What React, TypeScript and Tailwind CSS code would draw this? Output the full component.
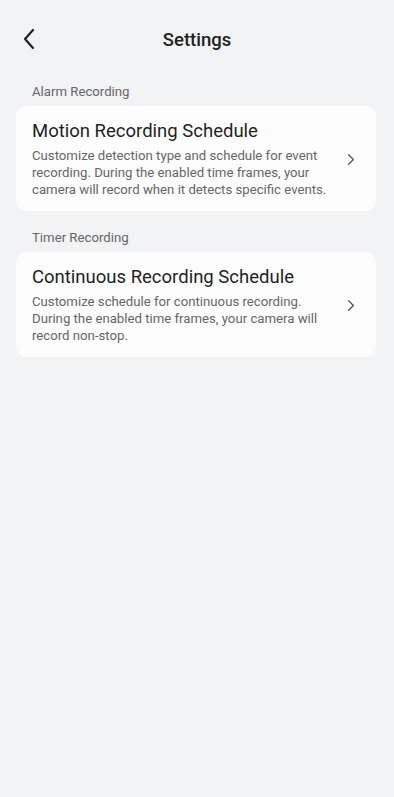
import React from 'react';

const sections = [
  {
    label: 'Alarm Recording',
    title: 'Motion Recording Schedule',
    desc: 'Customize detection type and schedule for event recording. During the enabled time frames, your camera will record when it detects specific events.',
  },
  {
    label: 'Timer Recording',
    title: 'Continuous Recording Schedule',
    desc: 'Customize schedule for continuous recording. During the enabled time frames, your camera will record non-stop.',
  },
];

const Chevron = ({ className }: { className?: string }) => (
  <svg viewBox="0 0 10 16" className={className} fill="none" stroke="currentColor" strokeWidth="1.6" strokeLinecap="round" strokeLinejoin="round">
    <path d="M2 2l6 6-6 6" />
  </svg>
);

export default function App() {
  return (
    <div className="min-h-[797px] w-full bg-[#f2f3f5] font-['Roboto',sans-serif]">
      {/* header */}
      <div className="relative h-[84px] flex items-start justify-center pt-[30px]">
        <button className="absolute left-[22px] top-[28px] text-[#222]">
          <svg viewBox="0 0 14 22" className="w-[14px] h-[22px]" fill="none" stroke="currentColor" strokeWidth="2.2" strokeLinecap="round" strokeLinejoin="round">
            <path d="M11 2L3 11l8 9" />
          </svg>
        </button>
        <h1 className="text-[18.5px] font-medium text-[#222] leading-[20px]">Settings</h1>
      </div>

      <div className="pl-4 pr-[18px]">
        {sections.map((s) => (
          <div key={s.title} className="mb-[19px]">
            <p className="pl-4 text-[13.2px] leading-[15px] text-[#666] mb-[7px]">{s.label}</p>
            <div className="bg-[#fdfdfd] rounded-[10px] pl-4 pr-[21px] pt-[14px] pb-[13px] flex items-center">
              <div className="flex-1 min-w-0">
                <h2 className="text-[18.5px] leading-[22px] text-[#1f1f1f] mb-[5px]">{s.title}</h2>
                <p className="text-[13.2px] leading-[17px] text-[#666]">{s.desc}</p>
              </div>
              <Chevron className="w-[8px] h-[13px] text-[#555] ml-3 shrink-0" />
            </div>
          </div>
        ))}
      </div>
    </div>
  );
}
